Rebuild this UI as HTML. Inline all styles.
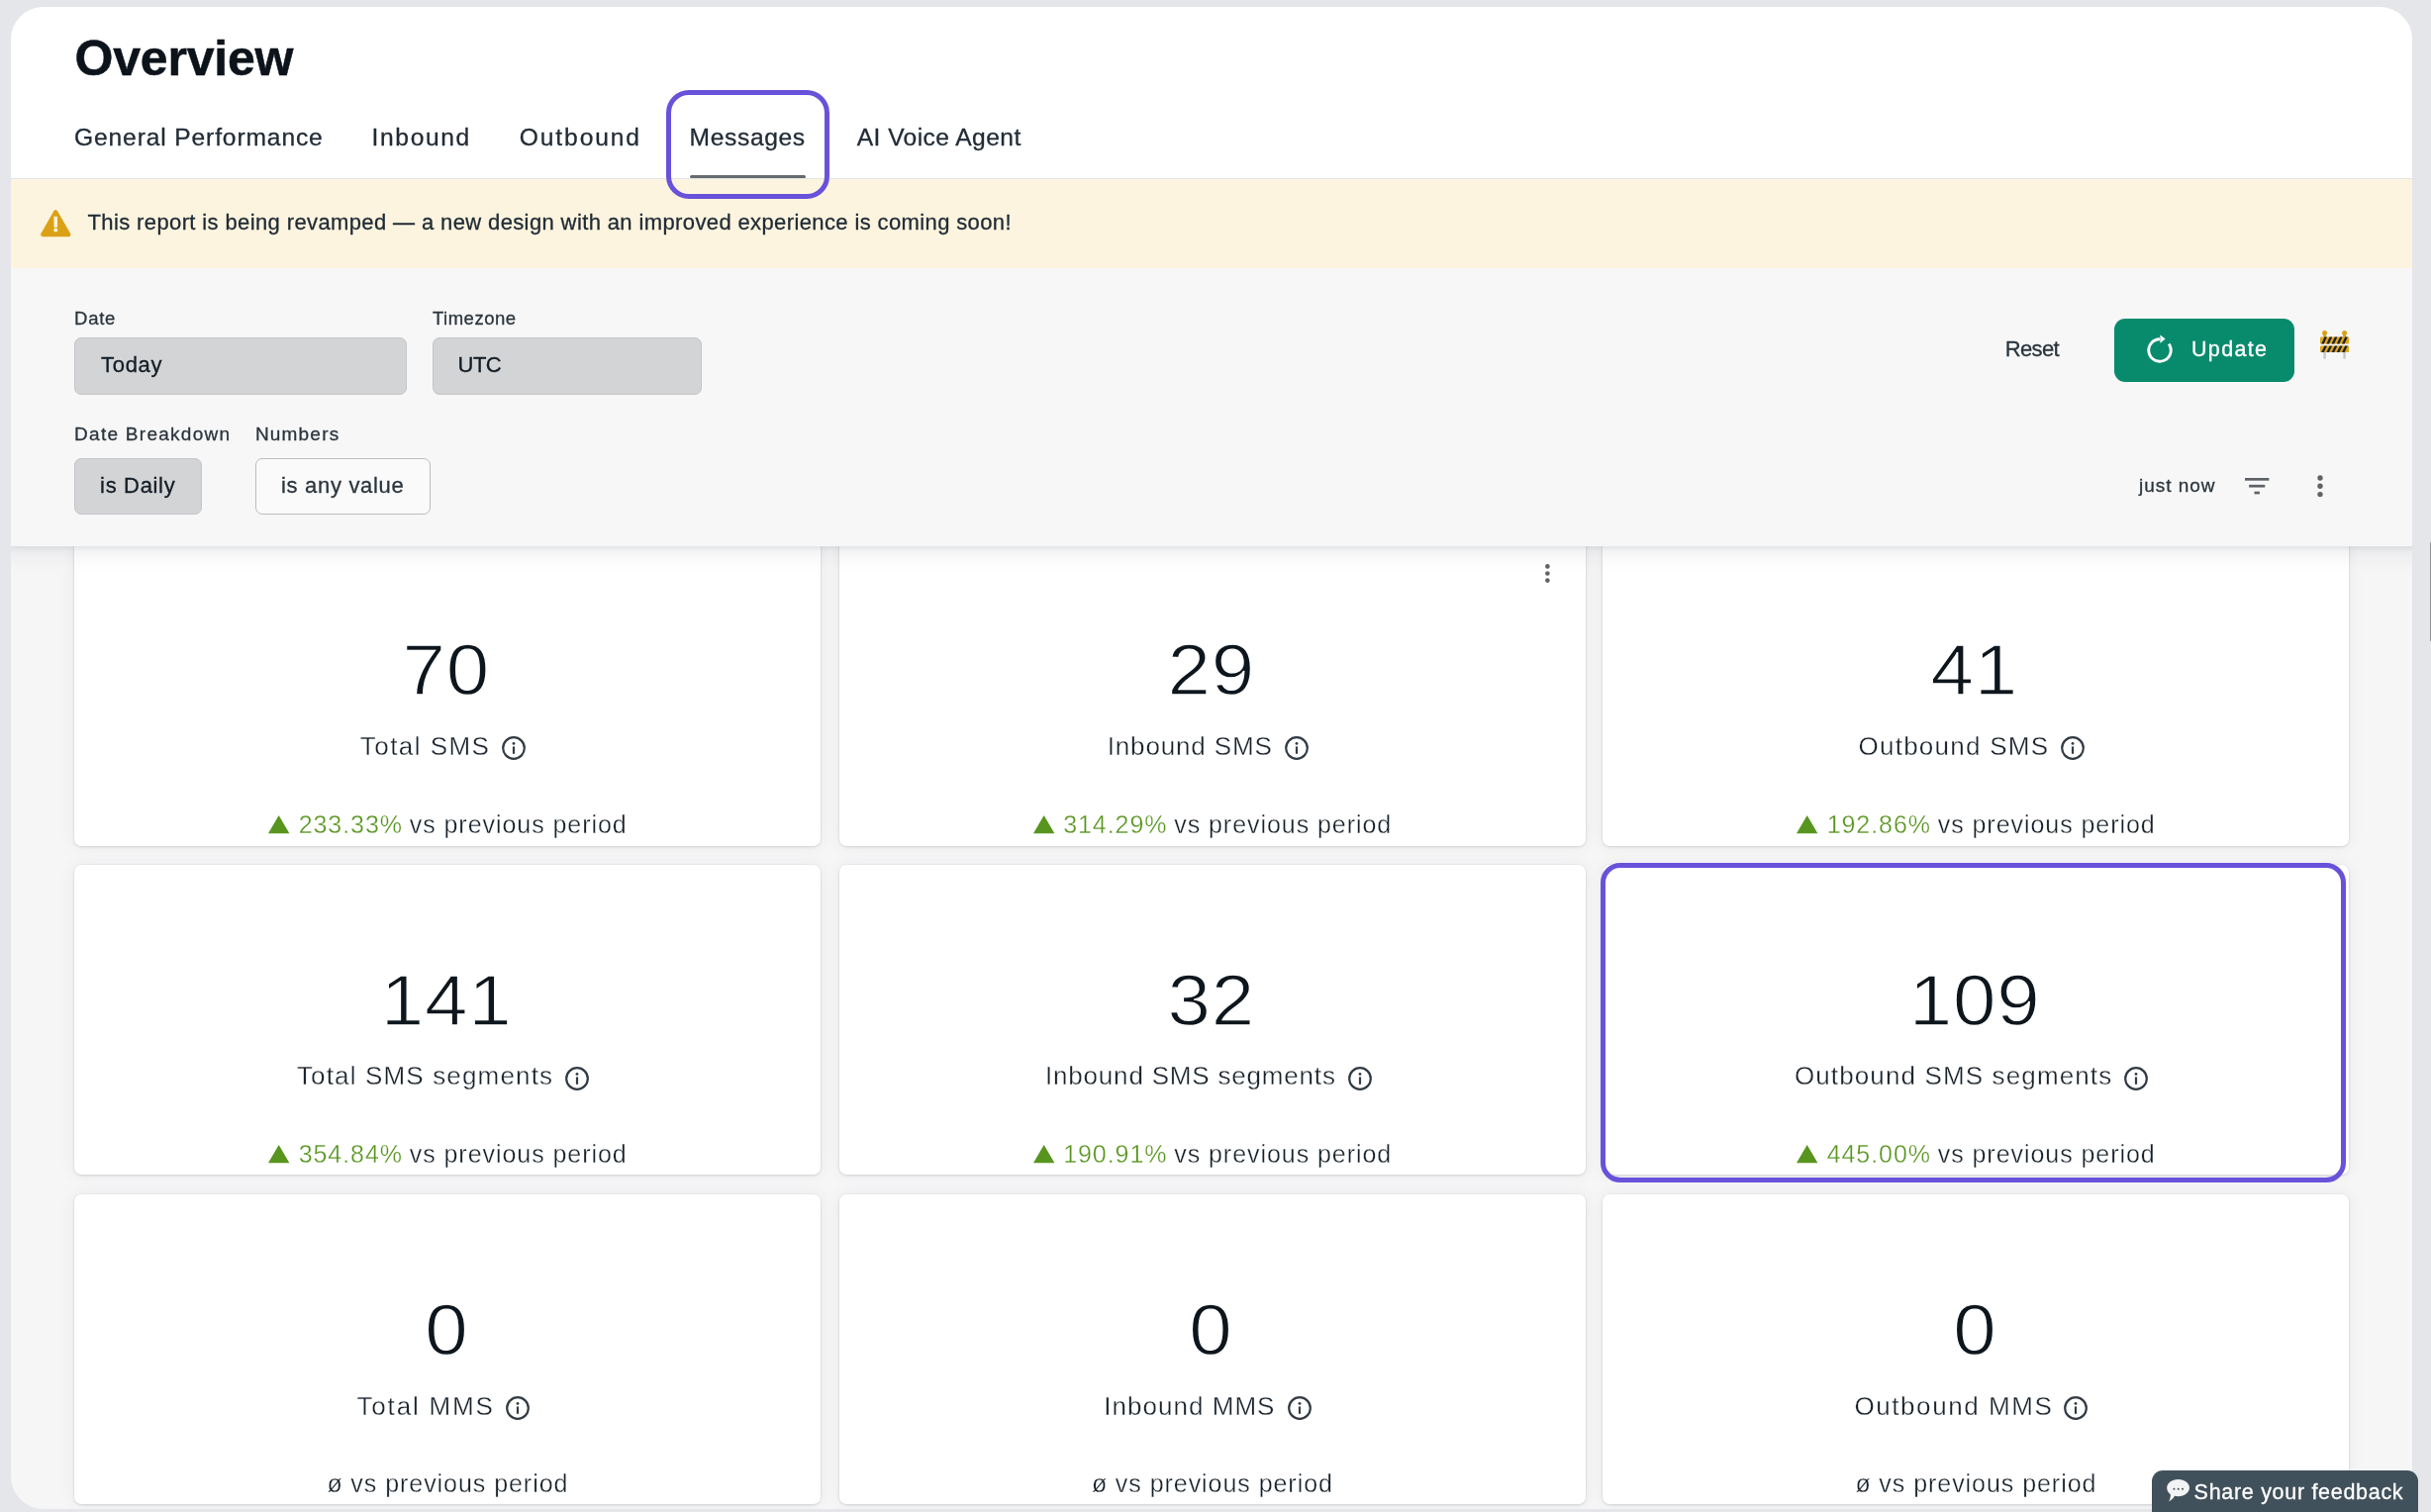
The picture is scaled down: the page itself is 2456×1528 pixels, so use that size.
<!DOCTYPE html>
<html lang="en">
<head>
<meta charset="utf-8">
<title>Overview – Messages</title>
<style>
html,body{margin:0;padding:0}
body{width:2456px;height:1528px;overflow:hidden;background:#E5E6EA;font-family:"Liberation Sans",sans-serif;position:relative}
.t{position:absolute;white-space:nowrap;line-height:1;-webkit-text-stroke:.3px currentColor}
.c{-webkit-text-stroke:.32px #fff}
.n{transform:scaleX(1.085);transform-origin:50% 50%;-webkit-text-stroke:1.3px #fff}
.abs{position:absolute}
.panel{position:absolute;left:11px;top:7px;width:2426px;height:1518px;border-radius:33px;overflow:hidden;background:#F6F6F7}
.in{position:absolute;left:-11px;top:-7px;width:2456px;height:1528px;will-change:transform}
.head{position:absolute;left:0;top:0;width:2456px;height:180px;background:#fff;border-bottom:1px solid #E4E5E7}
.banner{position:absolute;left:0;top:181px;width:2456px;height:90px;background:#FCF4DF}
.filters{position:absolute;left:0;top:271px;width:2456px;height:281px;background:#F7F7F7;box-shadow:0 2px 5px rgba(30,40,60,.07),0 6px 22px rgba(30,40,60,.09)}
.inp{position:absolute;box-sizing:border-box;border-radius:7px;background:#D3D4D6;border:1px solid #C3C5C8}
.inp.w{background:#FAFAFA;border-color:#B9BCC0}
.card{position:absolute;width:754px;height:313px;border-radius:7px;background:#fff;box-shadow:0 1px 3px rgba(40,45,60,.15),0 0 2px rgba(40,45,60,.08),0 0 18px rgba(40,45,60,.06)}
.hl{position:absolute;box-sizing:border-box;border:5.3px solid #6952DA;border-radius:20px}
.ul{position:absolute;height:3.2px;border-radius:1.6px;background:#666B70}
.btn{position:absolute;width:182px;height:64px;border-radius:11px;background:#088B6C}
.fb{position:absolute;left:2174px;top:1486px;width:269px;height:60px;border-radius:11px;background:#41515B}
.float{position:absolute;left:0;top:0;width:2456px;height:1528px;will-change:transform}
svg{position:absolute;overflow:visible}
</style>
</head>
<body>
<div class="panel"><div class="in">
<article class="card" style="left:75px;top:541.7px">
<div class="t n" style="left:335.2px;top:99.8px;font-size:72px;color:#0E161D;letter-spacing:0.7px;">70</div>
<div class="t c" style="left:288.8px;top:199.3px;font-size:26px;color:#1A232C;letter-spacing:1.45px;">Total SMS</div>
<svg style="left:432.3px;top:202.8px" width="24" height="24" viewBox="0 0 24 24"><circle cx="12" cy="12" r="10.8" fill="none" stroke="#333C45" stroke-width="2.2"/><circle cx="12" cy="7.4" r="1.45" fill="#333C45"/><rect x="10.9" y="10.4" width="2.2" height="7.4" fill="#333C45"/></svg>
<svg style="left:196.23px;top:282.1px" width="21.4" height="18.2" viewBox="0 0 21.4 18.2"><path d="M10.7 0 L21.4 18.2 L0 18.2 Z" fill="#58951F"/></svg>
<div class="t c" style="left:226.63px;top:279.1px;font-size:25px;color:#58951F;letter-spacing:0.95px;">233.33%</div>
<div class="t c" style="left:338.73px;top:279.1px;font-size:25px;color:#17212A;letter-spacing:0.95px;">vs previous period</div>
</article>
<article class="card" style="left:847.5px;top:541.7px">
<div class="t n" style="left:335.2px;top:99.8px;font-size:72px;color:#0E161D;letter-spacing:0.7px;">29</div>
<div class="t c" style="left:271.2px;top:199.3px;font-size:26px;color:#1A232C;letter-spacing:0.85px;">Inbound SMS</div>
<svg style="left:450.7px;top:202.8px" width="24" height="24" viewBox="0 0 24 24"><circle cx="12" cy="12" r="10.8" fill="none" stroke="#333C45" stroke-width="2.2"/><circle cx="12" cy="7.4" r="1.45" fill="#333C45"/><rect x="10.9" y="10.4" width="2.2" height="7.4" fill="#333C45"/></svg>
<svg style="left:196.23px;top:282.1px" width="21.4" height="18.2" viewBox="0 0 21.4 18.2"><path d="M10.7 0 L21.4 18.2 L0 18.2 Z" fill="#58951F"/></svg>
<div class="t c" style="left:226.63px;top:279.1px;font-size:25px;color:#58951F;letter-spacing:0.95px;">314.29%</div>
<div class="t c" style="left:338.73px;top:279.1px;font-size:25px;color:#17212A;letter-spacing:0.95px;">vs previous period</div>
<svg style="left:712.5px;top:27.3px" width="6" height="22" viewBox="0 0 6 22"><circle cx="3.4" cy="3.4" r="2.3" fill="#5F6368"/><circle cx="3.4" cy="10.5" r="2.3" fill="#5F6368"/><circle cx="3.4" cy="17.6" r="2.3" fill="#5F6368"/></svg>
</article>
<article class="card" style="left:1619px;top:541.7px">
<div class="t n" style="left:335.2px;top:99.8px;font-size:72px;color:#0E161D;letter-spacing:0.7px;">41</div>
<div class="t c" style="left:258.5px;top:199.3px;font-size:26px;color:#1A232C;letter-spacing:1.25px;">Outbound SMS</div>
<svg style="left:463.2px;top:202.8px" width="24" height="24" viewBox="0 0 24 24"><circle cx="12" cy="12" r="10.8" fill="none" stroke="#333C45" stroke-width="2.2"/><circle cx="12" cy="7.4" r="1.45" fill="#333C45"/><rect x="10.9" y="10.4" width="2.2" height="7.4" fill="#333C45"/></svg>
<svg style="left:196.23px;top:282.1px" width="21.4" height="18.2" viewBox="0 0 21.4 18.2"><path d="M10.7 0 L21.4 18.2 L0 18.2 Z" fill="#58951F"/></svg>
<div class="t c" style="left:226.63px;top:279.1px;font-size:25px;color:#58951F;letter-spacing:0.95px;">192.86%</div>
<div class="t c" style="left:338.73px;top:279.1px;font-size:25px;color:#17212A;letter-spacing:0.95px;">vs previous period</div>
</article>
<article class="card" style="left:75px;top:873.7px">
<div class="t n" style="left:314.83px;top:101px;font-size:72px;color:#0E161D;letter-spacing:0.7px;">141</div>
<div class="t c" style="left:224.9px;top:200.5px;font-size:26px;color:#1A232C;letter-spacing:1.16px;">Total SMS segments</div>
<svg style="left:496px;top:204px" width="24" height="24" viewBox="0 0 24 24"><circle cx="12" cy="12" r="10.8" fill="none" stroke="#333C45" stroke-width="2.2"/><circle cx="12" cy="7.4" r="1.45" fill="#333C45"/><rect x="10.9" y="10.4" width="2.2" height="7.4" fill="#333C45"/></svg>
<svg style="left:196.23px;top:283.3px" width="21.4" height="18.2" viewBox="0 0 21.4 18.2"><path d="M10.7 0 L21.4 18.2 L0 18.2 Z" fill="#58951F"/></svg>
<div class="t c" style="left:226.63px;top:280.3px;font-size:25px;color:#58951F;letter-spacing:0.95px;">354.84%</div>
<div class="t c" style="left:338.73px;top:280.3px;font-size:25px;color:#17212A;letter-spacing:0.95px;">vs previous period</div>
</article>
<article class="card" style="left:847.5px;top:873.7px">
<div class="t n" style="left:335.2px;top:101px;font-size:72px;color:#0E161D;letter-spacing:0.7px;">32</div>
<div class="t c" style="left:208.5px;top:200.5px;font-size:26px;color:#1A232C;letter-spacing:0.81px;">Inbound SMS segments</div>
<svg style="left:514.7px;top:204px" width="24" height="24" viewBox="0 0 24 24"><circle cx="12" cy="12" r="10.8" fill="none" stroke="#333C45" stroke-width="2.2"/><circle cx="12" cy="7.4" r="1.45" fill="#333C45"/><rect x="10.9" y="10.4" width="2.2" height="7.4" fill="#333C45"/></svg>
<svg style="left:196.23px;top:283.3px" width="21.4" height="18.2" viewBox="0 0 21.4 18.2"><path d="M10.7 0 L21.4 18.2 L0 18.2 Z" fill="#58951F"/></svg>
<div class="t c" style="left:226.63px;top:280.3px;font-size:25px;color:#58951F;letter-spacing:0.95px;">190.91%</div>
<div class="t c" style="left:338.73px;top:280.3px;font-size:25px;color:#17212A;letter-spacing:0.95px;">vs previous period</div>
</article>
<article class="card" style="left:1619px;top:873.7px">
<div class="t n" style="left:314.83px;top:101px;font-size:72px;color:#0E161D;letter-spacing:0.7px;">109</div>
<div class="t c" style="left:193.9px;top:200.5px;font-size:26px;color:#1A232C;letter-spacing:1.13px;">Outbound SMS segments</div>
<svg style="left:527.2px;top:204px" width="24" height="24" viewBox="0 0 24 24"><circle cx="12" cy="12" r="10.8" fill="none" stroke="#333C45" stroke-width="2.2"/><circle cx="12" cy="7.4" r="1.45" fill="#333C45"/><rect x="10.9" y="10.4" width="2.2" height="7.4" fill="#333C45"/></svg>
<svg style="left:196.23px;top:283.3px" width="21.4" height="18.2" viewBox="0 0 21.4 18.2"><path d="M10.7 0 L21.4 18.2 L0 18.2 Z" fill="#58951F"/></svg>
<div class="t c" style="left:226.63px;top:280.3px;font-size:25px;color:#58951F;letter-spacing:0.95px;">445.00%</div>
<div class="t c" style="left:338.73px;top:280.3px;font-size:25px;color:#17212A;letter-spacing:0.95px;">vs previous period</div>
</article>
<article class="card" style="left:75px;top:1207px">
<div class="t n" style="left:355.58px;top:101px;font-size:72px;color:#0E161D;letter-spacing:0.7px;">0</div>
<div class="t c" style="left:285.5px;top:200.5px;font-size:26px;color:#1A232C;letter-spacing:1.82px;">Total MMS</div>
<svg style="left:436.3px;top:204px" width="24" height="24" viewBox="0 0 24 24"><circle cx="12" cy="12" r="10.8" fill="none" stroke="#333C45" stroke-width="2.2"/><circle cx="12" cy="7.4" r="1.45" fill="#333C45"/><rect x="10.9" y="10.4" width="2.2" height="7.4" fill="#333C45"/></svg>
<div class="t c" style="left:255.59px;top:280.3px;font-size:25px;color:#17212A;">ø</div>
<div class="t c" style="left:279.37px;top:280.3px;font-size:25px;color:#17212A;letter-spacing:0.95px;">vs previous period</div>
</article>
<article class="card" style="left:847.5px;top:1207px">
<div class="t n" style="left:355.58px;top:101px;font-size:72px;color:#0E161D;letter-spacing:0.7px;">0</div>
<div class="t c" style="left:267.7px;top:200.5px;font-size:26px;color:#1A232C;letter-spacing:1.04px;">Inbound MMS</div>
<svg style="left:453.9px;top:204px" width="24" height="24" viewBox="0 0 24 24"><circle cx="12" cy="12" r="10.8" fill="none" stroke="#333C45" stroke-width="2.2"/><circle cx="12" cy="7.4" r="1.45" fill="#333C45"/><rect x="10.9" y="10.4" width="2.2" height="7.4" fill="#333C45"/></svg>
<div class="t c" style="left:255.59px;top:280.3px;font-size:25px;color:#17212A;">ø</div>
<div class="t c" style="left:279.37px;top:280.3px;font-size:25px;color:#17212A;letter-spacing:0.95px;">vs previous period</div>
</article>
<article class="card" style="left:1619px;top:1207px">
<div class="t n" style="left:355.58px;top:101px;font-size:72px;color:#0E161D;letter-spacing:0.7px;">0</div>
<div class="t c" style="left:254.5px;top:200.5px;font-size:26px;color:#1A232C;letter-spacing:1.56px;">Outbound MMS</div>
<svg style="left:466.3px;top:204px" width="24" height="24" viewBox="0 0 24 24"><circle cx="12" cy="12" r="10.8" fill="none" stroke="#333C45" stroke-width="2.2"/><circle cx="12" cy="7.4" r="1.45" fill="#333C45"/><rect x="10.9" y="10.4" width="2.2" height="7.4" fill="#333C45"/></svg>
<div class="t c" style="left:255.59px;top:280.3px;font-size:25px;color:#17212A;">ø</div>
<div class="t c" style="left:279.37px;top:280.3px;font-size:25px;color:#17212A;letter-spacing:0.95px;">vs previous period</div>
</article>
<div class="hl" style="left:1617px;top:872.4px;width:753.4px;height:322.2px"></div>
<section class="filters">
<div class="t" style="left:75.1px;top:42.3px;font-size:18.5px;color:#2B353E;letter-spacing:0.74px;">Date</div>
<div class="t" style="left:436.9px;top:42.3px;font-size:18.5px;color:#2B353E;letter-spacing:0.52px;">Timezone</div>
<div class="inp" style="left:75px;top:70px;width:336px;height:58px"></div>
<div class="inp" style="left:437px;top:70px;width:272px;height:58px"></div>
<div class="t" style="left:102px;top:87px;font-size:22px;color:#131C24;letter-spacing:0.7px;">Today</div>
<div class="t" style="left:462.5px;top:87px;font-size:22px;color:#131C24;letter-spacing:-0.51px;">UTC</div>
<div class="t" style="left:75.1px;top:158px;font-size:19px;color:#2B353E;letter-spacing:1.27px;">Date Breakdown</div>
<div class="t" style="left:257.9px;top:158px;font-size:19px;color:#2B353E;letter-spacing:1.2px;">Numbers</div>
<div class="inp" style="left:75px;top:192px;width:129px;height:57px"></div>
<div class="inp w" style="left:258px;top:192px;width:177px;height:57px"></div>
<div class="t" style="left:101.1px;top:209px;font-size:22px;color:#131C24;letter-spacing:0.67px;">is Daily</div>
<div class="t" style="left:284px;top:209px;font-size:22px;color:#2B353E;letter-spacing:0.69px;">is any value</div>
<div class="t" style="left:2025.7px;top:71px;font-size:22px;color:#2B353E;letter-spacing:-0.62px;">Reset</div>
<div class="btn" role="button" style="left:2136px;top:51px"></div>
<svg style="left:2168px;top:69.4px" width="28" height="28" viewBox="0 0 28 28"><path d="M23.17 7.58 A11.2 11.2 0 1 1 14 2.8" fill="none" stroke="#fff" stroke-width="2.9"/><path d="M14.4 -1.6 L19.6 2.6 L14.4 6.8 Z" fill="#fff"/></svg>
<div class="t" style="left:2214px;top:72px;font-size:21.5px;color:#fff;letter-spacing:1.33px;">Update</div>
<svg style="left:2343.9px;top:63.1px" width="29.1" height="28.6" viewBox="0 0 29.1 28.6">
<rect x="3.4" y="22" width="2.4" height="6.6" fill="#C3C6CA"/><rect x="23.4" y="22" width="2.4" height="6.6" fill="#C3C6CA"/>
<circle cx="4.6" cy="2.6" r="2.5" fill="#D9A016"/><circle cx="24.6" cy="2.6" r="2.5" fill="#D9A016"/>
<rect x="3.2" y="3.6" width="2.8" height="3.6" fill="#D9A016"/><rect x="23.2" y="3.6" width="2.8" height="3.6" fill="#D9A016"/>
<rect x="0" y="6.6" width="29.1" height="7" rx="1" fill="#DDA51A"/><rect x="0" y="15.4" width="29.1" height="6.7" rx="1" fill="#DDA51A"/>
<g fill="#1C2230"><path d="M1.2 13.6 L4.4 6.6 L7 6.6 L3.8 13.6Z M6.4 13.6 L9.6 6.6 L12.2 6.6 L9 13.6Z M11.6 13.6 L14.8 6.6 L17.4 6.6 L14.2 13.6Z M16.8 13.6 L20 6.6 L22.6 6.6 L19.4 13.6Z M22 13.6 L25.2 6.6 L27.8 6.6 L24.6 13.6Z"/>
<path d="M1.2 22.1 L4.4 15.4 L7 15.4 L3.8 22.1Z M6.4 22.1 L9.6 15.4 L12.2 15.4 L9 22.1Z M11.6 22.1 L14.8 15.4 L17.4 15.4 L14.2 22.1Z M16.8 22.1 L20 15.4 L22.6 15.4 L19.4 22.1Z M22 22.1 L25.2 15.4 L27.8 15.4 L24.6 22.1Z"/></g></svg>
<div class="t" style="left:2161px;top:209.7px;font-size:19px;color:#2B353E;letter-spacing:0.97px;">just now</div>
<svg style="left:2267.7px;top:211.6px" width="24.4" height="16.4" viewBox="0 0 24.4 16.4"><rect x="0" y="0" width="24.4" height="2.7" fill="#5F6368"/><rect x="4.1" y="6.85" width="16.2" height="2.7" fill="#5F6368"/><rect x="9.5" y="13.7" width="5.4" height="2.7" fill="#5F6368"/></svg>
<svg style="left:2341px;top:208.6px" width="6" height="22.4" viewBox="0 0 6 22.4"><circle cx="3" cy="3" r="2.7" fill="#5F6368"/><circle cx="3" cy="11.2" r="2.7" fill="#5F6368"/><circle cx="3" cy="19.6" r="2.7" fill="#5F6368"/></svg>
</section>
<div class="banner" role="alert">
<svg style="left:40.7px;top:30.7px" width="30.5" height="27.3" viewBox="0 0 30.5 27.3"><path d="M15.25 2.2 L28.3 25.1 L2.2 25.1 Z" fill="#DBA116" stroke="#DBA116" stroke-width="4.2" stroke-linejoin="round"/><rect x="13.5" y="6.7" width="3.5" height="11" rx=".6" fill="#FCF4DF"/><circle cx="15.25" cy="20.6" r="2" fill="#FCF4DF"/></svg>
<div class="t" style="left:88.5px;top:33px;font-size:22px;color:#1F2A34;letter-spacing:0.38px;">This report is being revamped — a new design with an improved experience is coming soon!</div>
</div>
<header class="head">
<div class="t" style="-webkit-text-stroke:.5px #0C131A;left:75.5px;top:34.2px;font-size:50px;color:#0C131A;letter-spacing:-0.2px;font-weight:700;">Overview</div>
<div class="t" style="left:75px;top:126.8px;font-size:24.6px;color:#212C36;letter-spacing:0.87px;">General Performance</div>
<div class="t" style="left:375.6px;top:126.8px;font-size:24.6px;color:#212C36;letter-spacing:1.62px;">Inbound</div>
<div class="t" style="left:524.8px;top:126.8px;font-size:24.6px;color:#212C36;letter-spacing:1.88px;">Outbound</div>
<div class="t" style="left:696.6px;top:126.8px;font-size:24.6px;color:#212C36;letter-spacing:0.64px;">Messages</div>
<div class="t" style="left:865.8px;top:126.8px;font-size:24.6px;color:#212C36;letter-spacing:0.42px;">AI Voice Agent</div>
<div class="ul" style="left:697px;top:176.8px;width:117px"></div>
<div class="hl" style="left:673px;top:91px;width:165.2px;height:110px;border-radius:23px"></div>
</header>
</div></div>
<div class="float">
<div class="abs" style="left:2454.5px;top:548px;width:1.5px;height:100px;border-radius:1px;background:#909396"></div>
<div class="fb"></div>
<svg style="left:2189px;top:1495.4px" width="23" height="22.4" viewBox="0 0 23 22.4"><path d="M11.6 0 C18 0 23 3.8 23 8.6 C23 13.4 18 17.2 11.6 17.2 C10.3 17.2 9.1 17.05 8 16.75 C6.8 19 4.6 21.4 2 22.2 C3.4 20.2 4 17.6 3.8 15.2 C1.5 13.6 0.2 11.3 0.2 8.6 C0.2 3.8 5.2 0 11.6 0Z" fill="#F2F3F4"/><circle cx="7.4" cy="9.8" r="1.05" fill="#4A545C"/><circle cx="11.7" cy="9.8" r="1.05" fill="#4A545C"/><circle cx="16" cy="9.8" r="1.05" fill="#4A545C"/></svg>
<div class="t" style="left:2216.6px;top:1498px;font-size:21.5px;color:#fff;letter-spacing:0.7px;">Share your feedback</div>
</div>
</body>
</html>
